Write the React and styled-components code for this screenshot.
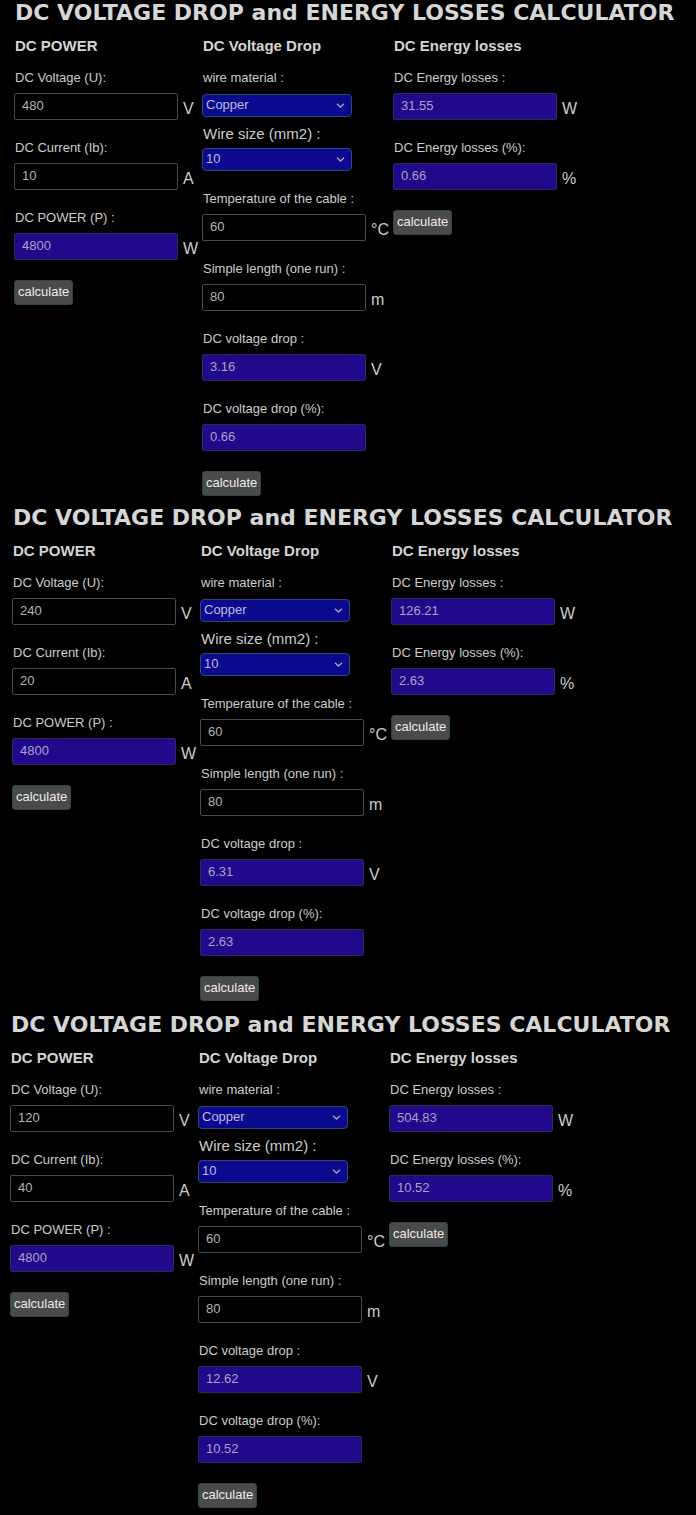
import React from "react";
import styled, { createGlobalStyle } from "styled-components";

const GlobalStyle = createGlobalStyle`
  html, body { margin: 0; padding: 0; background: #000; }
  body { font-family: "Liberation Sans", Arial, sans-serif; color: #cfcfcf; }
  * { box-sizing: border-box; }
`;

const Calculator = styled.section`
  padding-left: ${(p) => p.$left}px;
  margin-top: ${(p) => p.$top}px;
  padding-bottom: 9px;
`;

const Title = styled.h1`
  margin: 0 0 12px 1px;
  font-family: "DejaVu Sans", sans-serif;
  font-weight: bold;
  font-size: 22px;
  line-height: 26px;
  color: #d6d6d6;
  white-space: nowrap;
`;

const Columns = styled.div`
  display: grid;
  grid-template-columns: 188px 191px 1fr;
  align-items: start;
`;

const Column = styled.div`
  display: flex;
  flex-direction: column;
  align-items: flex-start;
`;

const Heading = styled.h3`
  margin: 0 0 16px 1px;
  font-size: 15px;
  line-height: 16px;
  font-weight: bold;
  color: #d4d4d4;
`;

const Field = styled.div`
  display: flex;
  flex-direction: column;
  margin-bottom: ${(p) => p.$mb ?? 20}px;
`;

const Label = styled.label`
  margin: 0 0 ${(p) => p.$mb ?? 8}px 1px;
  font-size: ${(p) => (p.$big ? 15 : 13)}px;
  line-height: ${(p) => (p.$big ? 18 : 15)}px;
  color: #cccccc;
`;

const Row = styled.div`
  display: flex;
  align-items: center;
`;

const Input = styled.input`
  width: 164px;
  height: 27px;
  margin: 0;
  padding: 0 0 2px 7px;
  border: 1px solid ${(p) => (p.$result ? "#2e2a55" : "#4a4a4a")};
  border-radius: 2px;
  background: ${(p) => (p.$result ? "#22088a" : "#000")};
  color: ${(p) => (p.$result ? "#a9a3c6" : "#b4b4b4")};
  font-family: "Liberation Sans", Arial, sans-serif;
  font-size: 13px;
  outline: none;
`;

const Unit = styled.span`
  margin: 5px 0 0 5px;
  font-size: 16px;
  line-height: 18px;
  color: #cccccc;
`;

const SelectBox = styled.div`
  position: relative;
  width: 150px;
  height: 23px;
`;

const Select = styled.select`
  appearance: none;
  -webkit-appearance: none;
  width: 100%;
  height: 100%;
  margin: 0;
  padding: 0 0 2px 3px;
  border: 1px solid #2b4a6e;
  border-radius: 4px;
  background: #0b0a8e;
  color: #bdbde0;
  font-family: "Liberation Sans", Arial, sans-serif;
  font-size: 13px;
  outline: none;
`;

const Chevron = styled.svg`
  position: absolute;
  right: 7px;
  top: 9px;
  pointer-events: none;
`;

const Button = styled.button`
  height: 25px;
  margin: 0;
  padding: 0 3px 2px;
  border: 1px solid #284848;
  border-radius: 3px;
  background: #4a4a4a;
  color: #ececec;
  font-family: "Liberation Sans", Arial, sans-serif;
  font-size: 13px;
`;

function NumField({ label, value, unit, result }) {
  return (
    <Field>
      <Label>{label}</Label>
      <Row>
        <Input $result={result} readOnly value={value} />
        {unit && <Unit>{unit}</Unit>}
      </Row>
    </Field>
  );
}

function SelField({ label, value, big, mb, labelMb }) {
  return (
    <Field $mb={mb}>
      <Label $big={big} $mb={labelMb}>{label}</Label>
      <SelectBox>
        <Select value={value} onChange={() => {}}>
          <option>{value}</option>
        </Select>
        <Chevron width="9" height="5" viewBox="0 0 9 5">
          <path d="M1 0.8 L4.5 4 L8 0.8" fill="none" stroke="#a8a8b8" strokeWidth="1.3" />
        </Chevron>
      </SelectBox>
    </Field>
  );
}

const data = [
  { left: 14, top: 0, u: "480", i: "10", p: "4800", vd: "3.16", vdp: "0.66", el: "31.55", elp: "0.66" },
  { left: 12, top: 0, u: "240", i: "20", p: "4800", vd: "6.31", vdp: "2.63", el: "126.21", elp: "2.63" },
  { left: 10, top: 2, u: "120", i: "40", p: "4800", vd: "12.62", vdp: "10.52", el: "504.83", elp: "10.52" },
];

function CalculatorBlock({ d }) {
  return (
    <Calculator $left={d.left} $top={d.top}>
      <Title>DC VOLTAGE DROP and ENERGY LOSSES CALCULATOR</Title>
      <Columns>
        <Column>
          <Heading>DC POWER</Heading>
          <NumField label="DC Voltage (U):" value={d.u} unit="V" />
          <NumField label="DC Current (Ib):" value={d.i} unit="A" />
          <NumField label="DC POWER (P) :" value={d.p} unit="W" result />
          <Button>calculate</Button>
        </Column>
        <Column>
          <Heading>DC Voltage Drop</Heading>
          <SelField label="wire material :" value="Copper" mb={8} labelMb={9} />
          <SelField label="Wire size (mm2) :" value="10" big labelMb={5} />
          <NumField label="Temperature of the cable :" value="60" unit="°C" />
          <NumField label="Simple length (one run) :" value="80" unit="m" />
          <NumField label="DC voltage drop :" value={d.vd} unit="V" result />
          <NumField label="DC voltage drop (%):" value={d.vdp} result />
          <Button>calculate</Button>
        </Column>
        <Column>
          <Heading>DC Energy losses</Heading>
          <NumField label="DC Energy losses :" value={d.el} unit="W" result />
          <NumField label="DC Energy losses (%):" value={d.elp} unit="%" result />
          <Button>calculate</Button>
        </Column>
      </Columns>
    </Calculator>
  );
}

export default function App() {
  return (
    <>
      <GlobalStyle />
      {data.map((d, k) => (
        <CalculatorBlock key={k} d={d} />
      ))}
    </>
  );
}
